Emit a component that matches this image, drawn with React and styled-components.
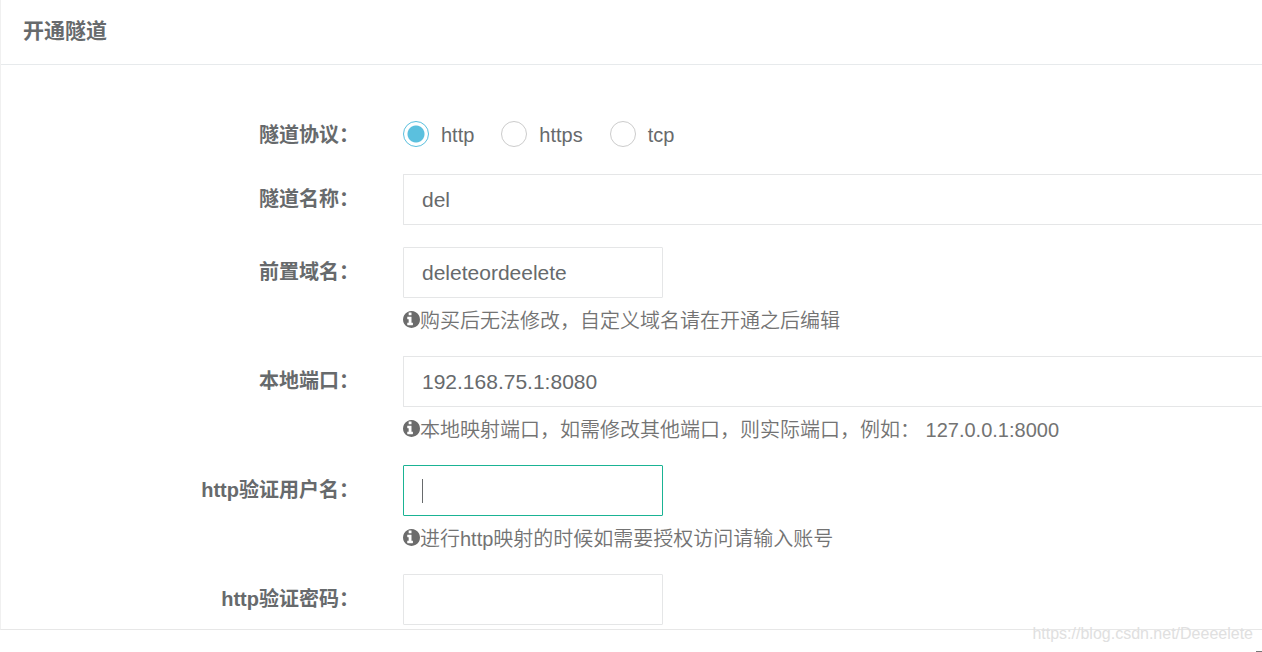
import React, { useState } from 'react';
import styled, { createGlobalStyle } from 'styled-components';

const GlobalStyle = createGlobalStyle`
  * {
    box-sizing: border-box;
  }
  body {
    margin: 0;
    background: #fff;
    color: #676a6c;
    font-family: 'Liberation Sans', 'Noto Sans CJK SC', sans-serif;
    font-size: 20px;
  }
`;

const Page = styled.main`
  position: relative;
  min-height: 100vh;
  overflow: hidden;
`;

const Panel = styled.section`
  border-left: 1px solid #f0f0f0;
  border-bottom: 1px solid #e7e7e7;
`;

const PanelHeader = styled.header`
  padding: 15px 22px 17px;
  border-bottom: 1px solid #e7eaec;
`;

const Title = styled.h5`
  margin: 0;
  font-size: 21px;
  line-height: 32px;
`;

const Form = styled.form`
  display: flex;
  flex-direction: column;
  gap: 22px;
  padding: 45px 0 4px;
`;

const Row = styled.div`
  display: grid;
  grid-template-columns: 358px minmax(0, 1fr);
  column-gap: 44px;
`;

const Label = styled.label`
  padding-top: 10px;
  font-size: 20px;
  font-weight: 700;
  line-height: 30px;
  text-align: right;
`;

const Input = styled.input`
  display: block;
  width: ${(props) => (props.$wide ? '100%' : '260px')};
  height: 51px;
  padding: 0 18px;
  border: 1px solid #e5e6e7;
  border-right-width: ${(props) => (props.$wide ? '0' : '1px')};
  border-radius: 1px;
  background: #fff;
  color: inherit;
  font-family: inherit;
  font-size: 21px;
  outline: none;
  &:focus {
    border-color: #1ab394;
    caret-color: transparent;
  }
`;

const InputBox = styled.div`
  position: relative;
  width: fit-content;
  min-width: ${(props) => (props.$wide ? '100%' : '0')};
`;

const Caret = styled.span`
  position: absolute;
  top: 14px;
  left: 19px;
  width: 1px;
  height: 24px;
  background: #676a6c;
`;

const Hint = styled.p`
  display: flex;
  align-items: center;
  height: 36px;
  margin: 0;
  padding-top: 6px;
  color: #737373;
  font-size: 20px;
  font-weight: 350;
  white-space: pre;
  svg {
    width: 17px;
    height: 17px;
    flex: none;
    fill: #6c6c6c;
  }
`;

const RadioGroup = styled.div`
  display: flex;
  align-items: center;
  gap: 27px;
  height: 42px;
  padding-top: 6px;
`;

const RadioLabel = styled.label`
  display: flex;
  align-items: flex-end;
  gap: 12px;
  line-height: 24px;
`;

const Radio = styled.input`
  appearance: none;
  width: 26px;
  height: 26px;
  margin: 0;
  border: 1px solid #ccc;
  border-radius: 50%;
  background: #fff;
  &:checked {
    border-color: #5bc0de;
    background: radial-gradient(circle, #5bc0de 8px, #fff 9px);
  }
`;

const Watermark = styled.span`
  position: absolute;
  right: 9px;
  bottom: 9px;
  color: #e0e0e0;
  font-size: 16px;
  line-height: 18px;
`;

// top edge of the floating mark in the corner
const CornerMark = styled.span`
  position: absolute;
  right: 0;
  bottom: 0;
  width: 6px;
  height: 1px;
  background: #777;
`;

const InfoIcon = () => (
  <svg viewBox='128 128 1536 1536' aria-hidden='true'>
    <path d='M1024 1376v-160q0-14-9-23t-23-9h-96v-512q0-14-9-23t-23-9h-320q-14 0-23 9t-9 23v160q0 14 9 23t23 9h96v320h-96q-14 0-23 9t-9 23v160q0 14 9 23t23 9h448q14 0 23-9t9-23zm-128-896v-192q0-14-9-23t-23-9h-192q-14 0-23 9t-9 23v192q0 14 9 23t23 9h192q14 0 23-9t9-23zm768 416q0 209-103 385.5t-279.5 279.5-385.5 103-385.5-103-279.5-279.5-103-385.5 103-385.5 279.5-279.5 385.5-103 385.5 103 279.5 279.5 103 385.5z' />
  </svg>
);

const protocols = ['http', 'https', 'tcp'];

const fields = [
  { name: 'name', label: '隧道名称：', wide: true },
  {
    name: 'domain',
    label: '前置域名：',
    hint: '购买后无法修改，自定义域名请在开通之后编辑',
  },
  {
    name: 'port',
    label: '本地端口：',
    wide: true,
    hint: '本地映射端口，如需修改其他端口，则实际端口，例如： 127.0.0.1:8000',
  },
  {
    name: 'user',
    label: 'http验证用户名：',
    hint: '进行http映射的时候如需要授权访问请输入账号',
  },
  { name: 'password', label: 'http验证密码：', type: 'password' },
];

function App() {
  const [protocol, setProtocol] = useState('http');
  const [focused, setFocused] = useState('user');
  const [values, setValues] = useState({
    name: 'del',
    domain: 'deleteordeelete',
    port: '192.168.75.1:8080',
    user: '',
    password: '',
  });

  const handleChange = (event) => {
    setValues({ ...values, [event.target.name]: event.target.value });
  };

  return (
    <Page>
      <GlobalStyle />
      <Panel>
        <PanelHeader>
          <Title>开通隧道</Title>
        </PanelHeader>
        <Form>
          <Row>
            <Label as='span' id='protocol-label'>
              隧道协议：
            </Label>
            <RadioGroup role='radiogroup' aria-labelledby='protocol-label'>
              {protocols.map((item) => (
                <RadioLabel key={item}>
                  <Radio
                    type='radio'
                    name='protocol'
                    value={item}
                    checked={protocol === item}
                    onChange={() => setProtocol(item)}
                  />
                  {item}
                </RadioLabel>
              ))}
            </RadioGroup>
          </Row>

          {fields.map((item) => (
            <Row key={item.name}>
              <Label htmlFor={item.name}>{item.label}</Label>
              <div>
                <InputBox $wide={item.wide}>
                  <Input
                    id={item.name}
                    name={item.name}
                    type={item.type || 'text'}
                    $wide={item.wide}
                    value={values[item.name]}
                    onChange={handleChange}
                    autoFocus={item.name === 'user'}
                    onFocus={() => setFocused(item.name)}
                  />
                  {/* thin caret for an empty focused box */}
                  {focused === item.name && !values[item.name] && <Caret />}
                </InputBox>
                {item.hint && (
                  <Hint>
                    <InfoIcon />
                    {item.hint}
                  </Hint>
                )}
              </div>
            </Row>
          ))}
        </Form>
      </Panel>
      <Watermark>https://blog.csdn.net/Deeeelete</Watermark>
      <CornerMark />
    </Page>
  );
}

export default App;
